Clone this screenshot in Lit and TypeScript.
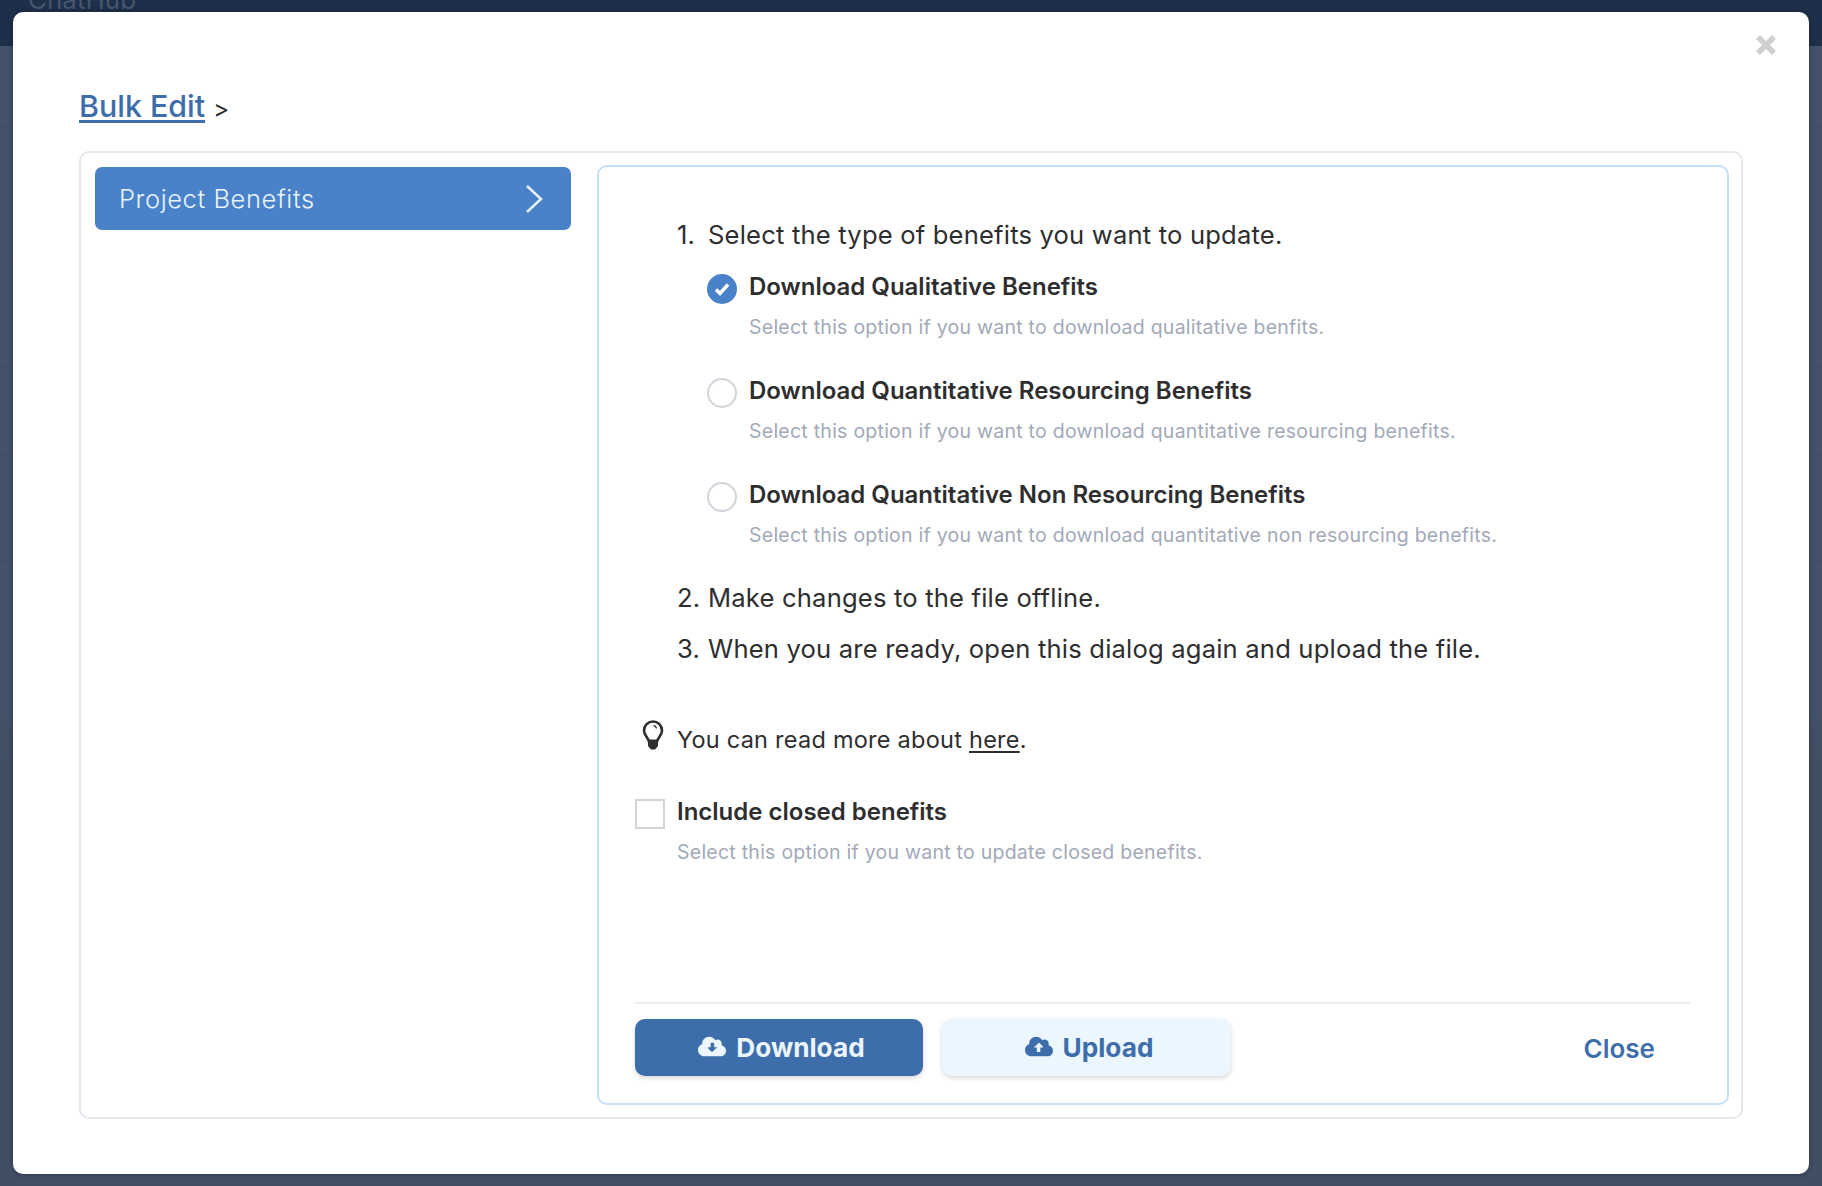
import { LitElement, html, css } from "lit";
import { customElement } from "lit/decorators.js";

const cloud = (arrow: string, fill: string) => html`<svg class="cloud" viewBox="0 0 640 512" aria-hidden="true">
  <path fill=${fill} d="M537.6 226.6c4.1-10.7 6.4-22.4 6.4-34.6 0-53-43-96-96-96-19.7 0-38.1 6-53.3 16.2C367 64.2 315.3 32 256 32c-88.4 0-160 71.6-160 160 0 2.7.1 5.4.2 8.1C40.2 219.8 0 273.2 0 336c0 79.5 64.5 144 144 144h368c70.7 0 128-57.3 128-128 0-61.9-44-113.6-102.4-125.4z"/>
  <path fill=${arrow === "down" ? "#3d6daa" : "#ebf6fe"} d=${arrow === "down"
    ? "M410.3 296.3l-80 80c-5.7 5.7-14.9 5.7-20.6 0l-80-80c-9.2-9.2-2.7-24.3 10.3-24.3h50v-88c0-8.8 7.2-16 16-16h48c8.8 0 16 7.2 16 16v88h50c13 0 19.5 15.1 10.3 24.3z"
    : "M229.7 255.7l80-80c5.7-5.7 14.9-5.7 20.6 0l80 80c9.2 9.2 2.7 24.3-10.3 24.3h-50v88c0 8.8-7.2 16-16 16h-48c-8.8 0-16-7.2-16-16v-88h-50c-13 0-19.5-15.1-10.3-24.3z"}/>
</svg>`;

@customElement("app-root")
export class AppRoot extends LitElement {
  static styles = css`
    :host { display: block; }
    * { box-sizing: border-box; }
    .page {
      width: 1822px; height: 1186px; position: relative; overflow: hidden;
      background: linear-gradient(180deg,
        #445269 0, #445269 127px, #404c62 127px, #404c62 128px,
        #445269 128px, #445269 257px, #404c62 257px, #404c62 258px,
        #445269 258px, #445269 367px, #404c62 367px, #404c62 368px,
        #445269 368px, #445269 455px, #404c62 455px, #404c62 456px,
        #445269 456px, #445269 560px, #404c62 560px, #404c62 561px,
        #445269 561px, #445269 700px, #414e64 760px, #414e64 100%);
      font-family: Inter, "Liberation Sans", sans-serif; color: #2e2e30;
      padding: 12px 13px 12px;
    }
    .topbar {
      position: absolute; left: 0; top: 0; right: 0; height: 46px; background: #1e2f4a;
      color: #46566e; font-size: 26px; line-height: 26px; padding-left: 28px;
      overflow: hidden;
    }
    .topbar span { display: block; margin-top: -13px; }
    .modal {
      position: relative; height: 1162px; background: #fff; border-radius: 10px;
      box-shadow: 0 0 4px 1px rgba(20, 30, 50, .35);
      padding: 67px 66px 55px 66px; display: flex; flex-direction: column;
    }
    .x { position: absolute; top: 23px; right: 33px; width: 20px; height: 20px; }
    .crumb { height: 72px; padding-top: 7px; font-size: 30.4px; font-weight: 500; line-height: 40px; color: #3d6daa; }
    .crumb a { color: inherit; text-decoration: underline; text-underline-offset: 3px; }
    .crumb span { font-size: 24px; color: #2e2e30; font-weight: 400; }
    .shell {
      flex: 1; border: 2px solid #e6e7ee; border-radius: 10px; padding: 12px 12px 12px 14px;
      display: flex; gap: 26px;
    }
    .tab {
      width: 476px; height: 63px; margin-top: 2px; background: #4a82c9; border-radius: 7px; color: #e9f3fc;
      font-size: 25.5px; font-weight: 300; letter-spacing: 0.6px;
      display: flex; align-items: center; justify-content: space-between; padding: 0 28px 0 24px;
    }
    .tab svg { width: 18px; height: 30px; }
    .panel {
      flex: 1; border: 2px solid #c5e0f6; border-radius: 10px; padding: 51px 36px 25px;
      display: flex; flex-direction: column;
    }
    .step { display: flex; gap: 8px; font-size: 25.6px; line-height: 34px; padding-left: 42px; letter-spacing: 0.18px; white-space: nowrap; }
    .num { width: 23px; flex: none; }
    .opts { padding: 20px 0 0 72px; display: flex; flex-direction: column; }
    .opt { display: flex; gap: 12px; height: 104px; }
    .opts .opt:last-child { height: 101px; }
    .radio { width: 30px; height: 30px; border-radius: 50%; border: 2px solid #d1d5db; flex: none; margin-top: 2px; }
    .radio.on { background: #4a82c9; border: none; display: flex; align-items: center; justify-content: center; }
    .radio svg { width: 16px; height: 14px; }
    .t { font-size: 24px; line-height: 30px; font-weight: 600; white-space: nowrap; }
    .d { font-size: 19.5px; line-height: 26px; margin-top: 12px; color: #a2a9b8; letter-spacing: 0.25px; white-space: nowrap; }
    .step.three { margin-top: 17px; }
    .tip { display: flex; align-items: flex-start; margin-top: 59px; font-size: 23.5px; line-height: 30px; letter-spacing: 0.25px; }
    .tip svg { width: 24px; height: 32px; margin: -6px 0 0 6px; }
    .tip span { margin-left: 12px; }
    .tip a { color: inherit; text-decoration: underline; text-underline-offset: 3px; }
    .check { display: flex; gap: 12px; margin-top: 42px; }
    .box { width: 30px; height: 30px; border: 2px solid #d1d5db; flex: none; margin-top: 2px; }
    .foot {
      margin-top: auto; border-top: 2px solid #eeeeee; padding-top: 15px;
      display: flex; align-items: flex-start; gap: 19px;
    }
    .btn {
      height: 57px; border-radius: 10px; display: flex; align-items: center; justify-content: center; gap: 10px;
      padding-left: 5px; font-size: 26.2px; font-weight: 650; box-shadow: 0 2px 5px rgba(0,0,0,.16);
    }
    .btn.dl { width: 288px; background: #3d6daa; color: #ebf6fe; }
    .btn.ul { width: 289px; background: #ebf6fe; color: #3d6daa; }
    .cloud { width: 28px; height: 23px; margin-top: -3px; }
    .close { margin-left: auto; margin-right: 36px; font-size: 26px; font-weight: 600; color: #3d6daa; line-height: 59px; }
  `;

  render() {
    const opts = [
      ["Download Qualitative Benefits", "Select this option if you want to download qualitative benfits.", true],
      ["Download Quantitative Resourcing Benefits", "Select this option if you want to download quantitative resourcing benefits.", false],
      ["Download Quantitative Non Resourcing Benefits", "Select this option if you want to download quantitative non resourcing benefits.", false],
    ] as const;
    return html`<div class="page">
      <div class="topbar"><span>ChatHub</span></div>
      <div class="modal">
        <svg class="x" viewBox="0 0 20 20"><path d="M2 2l16 16M18 2L2 18" stroke="#cfcfcf" stroke-width="5.5" fill="none"/></svg>
        <div class="crumb"><a href="#">Bulk Edit</a> <span>&gt;</span></div>
        <div class="shell">
          <div class="tab">Project Benefits
            <svg viewBox="0 0 18 30"><path d="M2 2l14 13L2 28" stroke="#e9f3fc" stroke-width="2.4" fill="none"/></svg>
          </div>
          <div class="panel">
            <div class="step"><span class="num">1.</span><span>Select the type of benefits you want to update.</span></div>
            <div class="opts">
              ${opts.map(([t, d, on]) => html`<div class="opt">
                <div class="radio ${on ? "on" : ""}">${on ? html`<svg viewBox="0 0 16 14"><path d="M2 7.5l4 4 8-9" stroke="#fff" stroke-width="3.4" fill="none"/></svg>` : ""}</div>
                <div><div class="t">${t}</div><div class="d">${d}</div></div>
              </div>`)}
            </div>
            <div class="step"><span class="num">2.</span><span>Make changes to the file offline.</span></div>
            <div class="step three"><span class="num">3.</span><span>When you are ready, open this dialog again and upload the file.</span></div>
            <div class="tip">
              <svg viewBox="0 0 24 32"><path d="M12 2.500a9 9 0 0 0-9 9c0 4.500 3.500 6.500 5 11h8c1.500-4.500 5-6.500 5-11a9 9 0 0 0-9-9z" fill="none" stroke="#2e2e30" stroke-width="2.600"/><path d="M7 20.500h10v6.500l-3 3.500h-4l-3-3.500z" fill="#2e2e30"/><path d="M12.500 6.500c1.500.3 2.700 1.300 3 2.800" fill="none" stroke="#2e2e30" stroke-width="1.400"/></svg>
              <span>You can read more about <a href="#">here</a>.</span>
            </div>
            <div class="check">
              <div class="box"></div>
              <div><div class="t">Include closed benefits</div><div class="d">Select this option if you want to update closed benefits.</div></div>
            </div>
            <div class="foot">
              <div class="btn dl">${cloud("down", "#ebf6fe")}Download</div>
              <div class="btn ul">${cloud("up", "#3d6daa")}Upload</div>
              <div class="close">Close</div>
            </div>
          </div>
        </div>
      </div>
    </div>`;
  }
}
